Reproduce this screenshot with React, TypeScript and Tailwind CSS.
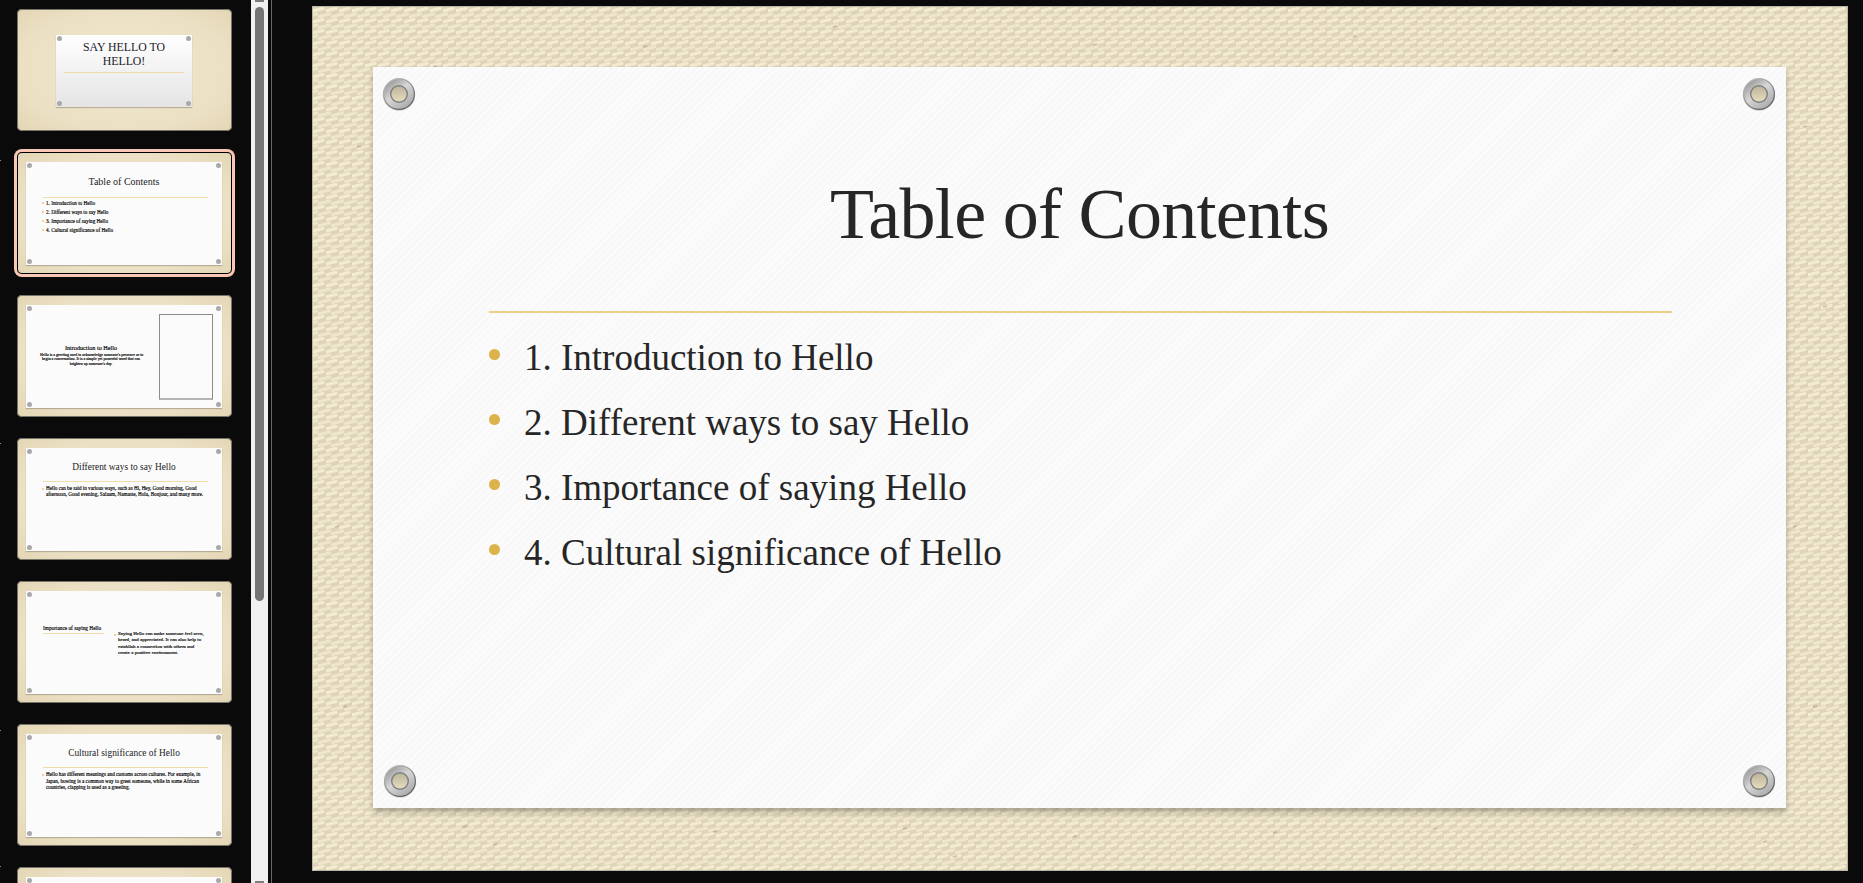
import type { ReactNode } from "react";

const serif = "font-['Liberation_Serif',_'Times_New_Roman',_serif]";
const inked = "[-webkit-text-stroke:0.15px_#000]";

const tocItems = [
  "1. Introduction to Hello",
  "2. Different ways to say Hello",
  "3. Importance of saying Hello",
  "4. Cultural significance of Hello",
];

const flecks = [
  [120, 60], [44, 140], [210, 330], [22, 520], [30, 700], [150, 820], [330, 40], [520, 20],
  [780, 38], [1040, 30], [1300, 44], [1490, 120], [1510, 300], [1480, 520], [1500, 700], [1450, 835],
  [180, 838], [400, 825], [590, 822], [760, 830], [960, 826], [1120, 822], [1320, 838], [640, 850],
];

const Canvas = () => (
  <svg className="absolute inset-0 h-full w-full" aria-hidden="true">
    <defs>
      <pattern id="weave" width="13" height="11" patternUnits="userSpaceOnUse">
        <rect width="13" height="11" fill="#e0d4b8" />
        <path d="M0 4 L10 1.5" stroke="#f3ecd2" strokeWidth="3.2" strokeLinecap="round" />
        <path d="M6.5 9.5 L16.5 7" stroke="#efe7cb" strokeWidth="3.2" strokeLinecap="round" />
        <path d="M-6.5 9.5 L3.5 7" stroke="#efe7cb" strokeWidth="3.2" strokeLinecap="round" />
      </pattern>
    </defs>
    <rect width="100%" height="100%" fill="url(#weave)" />
    {flecks.map(([x, y], i) => (
      <path key={i} d={`M${x} ${y} l4 -1`} stroke="#a8917a" strokeWidth="1.4" opacity="0.5" />
    ))}
  </svg>
);

const Grommet = ({ className }: { className: string }) => (
  <svg className={`absolute h-[34px] w-[34px] ${className}`} viewBox="0 0 34 34" aria-hidden="true">
    <defs>
      <linearGradient id="rim" x1="0.15" y1="0" x2="0.85" y2="1">
        <stop offset="0" stopColor="#c4c4c4" />
        <stop offset="0.5" stopColor="#8f8f8f" />
        <stop offset="1" stopColor="#4f4f4f" />
      </linearGradient>
      <linearGradient id="ring" x1="0.1" y1="0" x2="0.9" y2="1">
        <stop offset="0" stopColor="#8e8e8e" />
        <stop offset="0.45" stopColor="#d6d6d6" />
        <stop offset="1" stopColor="#a4a4a4" />
      </linearGradient>
      <linearGradient id="hole" x1="0" y1="0" x2="0" y2="1">
        <stop offset="0" stopColor="#bdb49b" />
        <stop offset="1" stopColor="#e6dcbd" />
      </linearGradient>
    </defs>
    <circle cx="17" cy="17.6" r="16.2" fill="#000" opacity="0.18" />
    <circle cx="17" cy="17" r="16" fill="url(#rim)" />
    <circle cx="17" cy="17" r="14.8" fill="url(#ring)" />
    <circle cx="17" cy="17" r="9" fill="#7f7f7f" />
    <circle cx="17" cy="17" r="7.6" fill="url(#hole)" />
  </svg>
);

const Dot = ({ className }: { className: string }) => (
  <span className={`absolute h-[5px] w-[5px] rounded-full bg-[#a9a9a9] ${className}`} />
);

const Thumb = ({
  children,
  selected,
  mark,
  panelClass = "ml-[9px] mt-[10px] h-[103px] w-[196px] bg-[#fbfbfb]",
}: {
  children: ReactNode;
  selected?: boolean;
  mark?: number;
  panelClass?: string;
}) => (
  <div
    className={`relative h-[122px] w-[215px] shrink-0 rounded-[5px] bg-[radial-gradient(ellipse_at_center,#f1e8cf_0%,#ebe0c3_70%,#e3d6b5_100%)] ${
      selected ? "shadow-[inset_0_0_0_1px_#000,0_0_0_3px_#f9c7b3]" : "shadow-[inset_0_0_0_1px_#77736a]"
    } flow-root`}
  >
    {mark !== undefined && (
      <span className="absolute left-[-17px] h-px w-px bg-[#8a8a8a]" style={{ top: mark }} />
    )}
    <div className={`relative shadow-[0_1px_1px_rgba(0,0,0,0.22)] ${panelClass}`}>
      <Dot className="left-[1px] top-[1px]" />
      <Dot className="right-[1px] top-[1px]" />
      <Dot className="bottom-[1px] left-[1px]" />
      <Dot className="bottom-[1px] right-[1px]" />
      {children}
    </div>
  </div>
);

const ThumbTitle = ({ children, className = "text-[9.4px]" }: { children: ReactNode; className?: string }) => (
  <div className={`text-center leading-[10px] text-[#1c1c1c] ${className}`}>{children}</div>
);

const ThumbRule = ({ className }: { className: string }) => <div className={`h-px bg-[#f0dca8] ${className}`} />;

const ThumbBullet = ({ children }: { children: ReactNode }) => (
  <div className={`relative whitespace-nowrap text-black ${inked}`}>
    <span className="absolute left-[-4px] top-[3px] h-[2px] w-[2px] rounded-full bg-[#e7c77a]" />
    {children}
  </div>
);

export default function App() {
  return (
    <div className={`flex h-screen w-full overflow-hidden bg-[#0a0a0a] ${serif}`}>
      {/* thumbnails */}
      <div className="flex w-[251px] shrink-0 flex-col gap-[21px] overflow-hidden pl-[17px] pt-[9px]">
        <Thumb panelClass="ml-[39px] mt-[26px] h-[72px] w-[136px] bg-[linear-gradient(180deg,#ffffff_0%,#e4e4e4_100%)]">
          <div className="pt-[5px] text-center text-[11.8px] leading-[14px] text-[#20202c]">
            SAY HELLO TO
            <br />
            HELLO!
          </div>
          <ThumbRule className="ml-[8px] mt-[4px] w-[120px]" />
        </Thumb>

        <Thumb selected mark={8}>
          <ThumbTitle className="pt-[15px] text-[10px]">Table of Contents</ThumbTitle>
          <ThumbRule className="ml-[17px] mt-[10px] w-[165px]" />
          <div className="ml-[20px] mt-px text-[5.2px] leading-[9px]">
            {tocItems.map((t) => (
              <ThumbBullet key={t}>{t}</ThumbBullet>
            ))}
          </div>
        </Thumb>

        <Thumb>
          <div className="flex h-full">
            <div className="ml-[14px] w-[102px] pt-[39px] text-center">
              <div className={`text-[6.2px] leading-[8px] text-black ${inked}`}>Introduction to Hello</div>
              <div className={`mt-[1px] whitespace-nowrap text-[3.95px] leading-[4.3px] text-black ${inked}`}>
                Hello is a greeting used to acknowledge someone's presence or to
                <br />
                begin a conversation. It is a simple yet powerful word that can
                <br />
                brighten up someone's day.
              </div>
            </div>
            <div className="ml-[17px] mt-[9px] h-[86px] w-[54px] border border-b-2 border-[#8c8c8c] border-b-[#b5b5b5]" />
          </div>
        </Thumb>

        <Thumb mark={5}>
          <ThumbTitle className="pt-[14px] text-[9.4px]">Different ways to say Hello</ThumbTitle>
          <ThumbRule className="ml-[17px] mt-[9px] w-[165px]" />
          <div className="ml-[20px] mt-[3px] text-[5.15px] leading-[6.2px]">
            <ThumbBullet>
              Hello can be said in various ways, such as Hi, Hey, Good morning, Good
              <br />
              afternoon, Good evening, Salaam, Namaste, Hola, Bonjour, and many more.
            </ThumbBullet>
          </div>
        </Thumb>

        <Thumb>
          <div className="flex">
            <div className="ml-[17px] w-[62px] pt-[34px]">
              <div className={`whitespace-nowrap text-[5.3px] leading-[7px] text-black ${inked}`}>
                Importance of saying Hello
              </div>
              <ThumbRule className="mt-[1px] w-[61px]" />
            </div>
            <div className="ml-[13px] pt-[40px] text-[5px] leading-[6.3px]">
              <ThumbBullet>
                Saying Hello can make someone feel seen,
                <br />
                heard, and appreciated. It can also help to
                <br />
                establish a connection with others and
                <br />
                create a positive environment.
              </ThumbBullet>
            </div>
          </div>
        </Thumb>

        <Thumb mark={6}>
          <ThumbTitle className="pt-[14px] text-[9.4px]">Cultural significance of Hello</ThumbTitle>
          <ThumbRule className="ml-[17px] mt-[9px] w-[165px]" />
          <div className="ml-[20px] mt-[3px] text-[5.2px] leading-[6.5px]">
            <ThumbBullet>
              Hello has different meanings and customs across cultures. For example, in
              <br />
              Japan, bowing is a common way to greet someone, while in some African
              <br />
              countries, clapping is used as a greeting.
            </ThumbBullet>
          </div>
        </Thumb>

        <Thumb mark={-1}>
          <span />
        </Thumb>
      </div>

      {/* scrollbar */}
      <div className="relative w-[17px] shrink-0 bg-[#f1f1f1]">
        <div className="absolute left-[4px] top-0 h-[2px] w-[9px] bg-[#7d7d7d]" />
        <div className="absolute left-[4px] top-[7px] h-[594px] w-[9px] rounded-[5px] bg-[#757575]" />
        <div className="absolute bottom-0 left-[4px] h-[2px] w-[9px] bg-[#7d7d7d]" />
      </div>

      {/* current slide */}
      <div className="ml-[3px] flex-1 border-l border-[#666666] pl-[40px] pt-[6px]">
        <div className="relative h-[865px] w-[1536px] overflow-hidden border border-[#b9b6ac] pl-[60px] pt-[60px]">
          <Canvas />
          <div className="relative h-[741px] w-[1413px] bg-[repeating-linear-gradient(135deg,#fbfbfb_0px,#fbfbfb_3px,#f8f8f8_3px,#f8f8f8_5px)] shadow-[0_4px_6px_rgba(0,0,0,0.28)]">
            <Grommet className="left-[9px] top-[10px]" />
            <Grommet className="right-[10px] top-[10px]" />
            <Grommet className="bottom-[10px] left-[10px]" />
            <Grommet className="bottom-[10px] right-[10px]" />

            <div className="pt-[107px] text-center text-[72px] leading-[80px] tracking-[-0.7px] text-[#262626]">
              Table of Contents
            </div>
            <div className="ml-[116px] mt-[57px] h-[2px] w-[1183px] bg-[#e8cf8c]" />
            <div className="ml-[116px] mt-[12px]">
              {tocItems.map((t) => (
                <div key={t} className="flex h-[65px] text-[37px] leading-[65px] text-[#262626]">
                  <span className="mt-[24px] h-[11px] w-[11px] rounded-full bg-[#dcb349]" />
                  <span className="ml-[24px]">{t}</span>
                </div>
              ))}
            </div>
          </div>
        </div>
      </div>
    </div>
  );
}
